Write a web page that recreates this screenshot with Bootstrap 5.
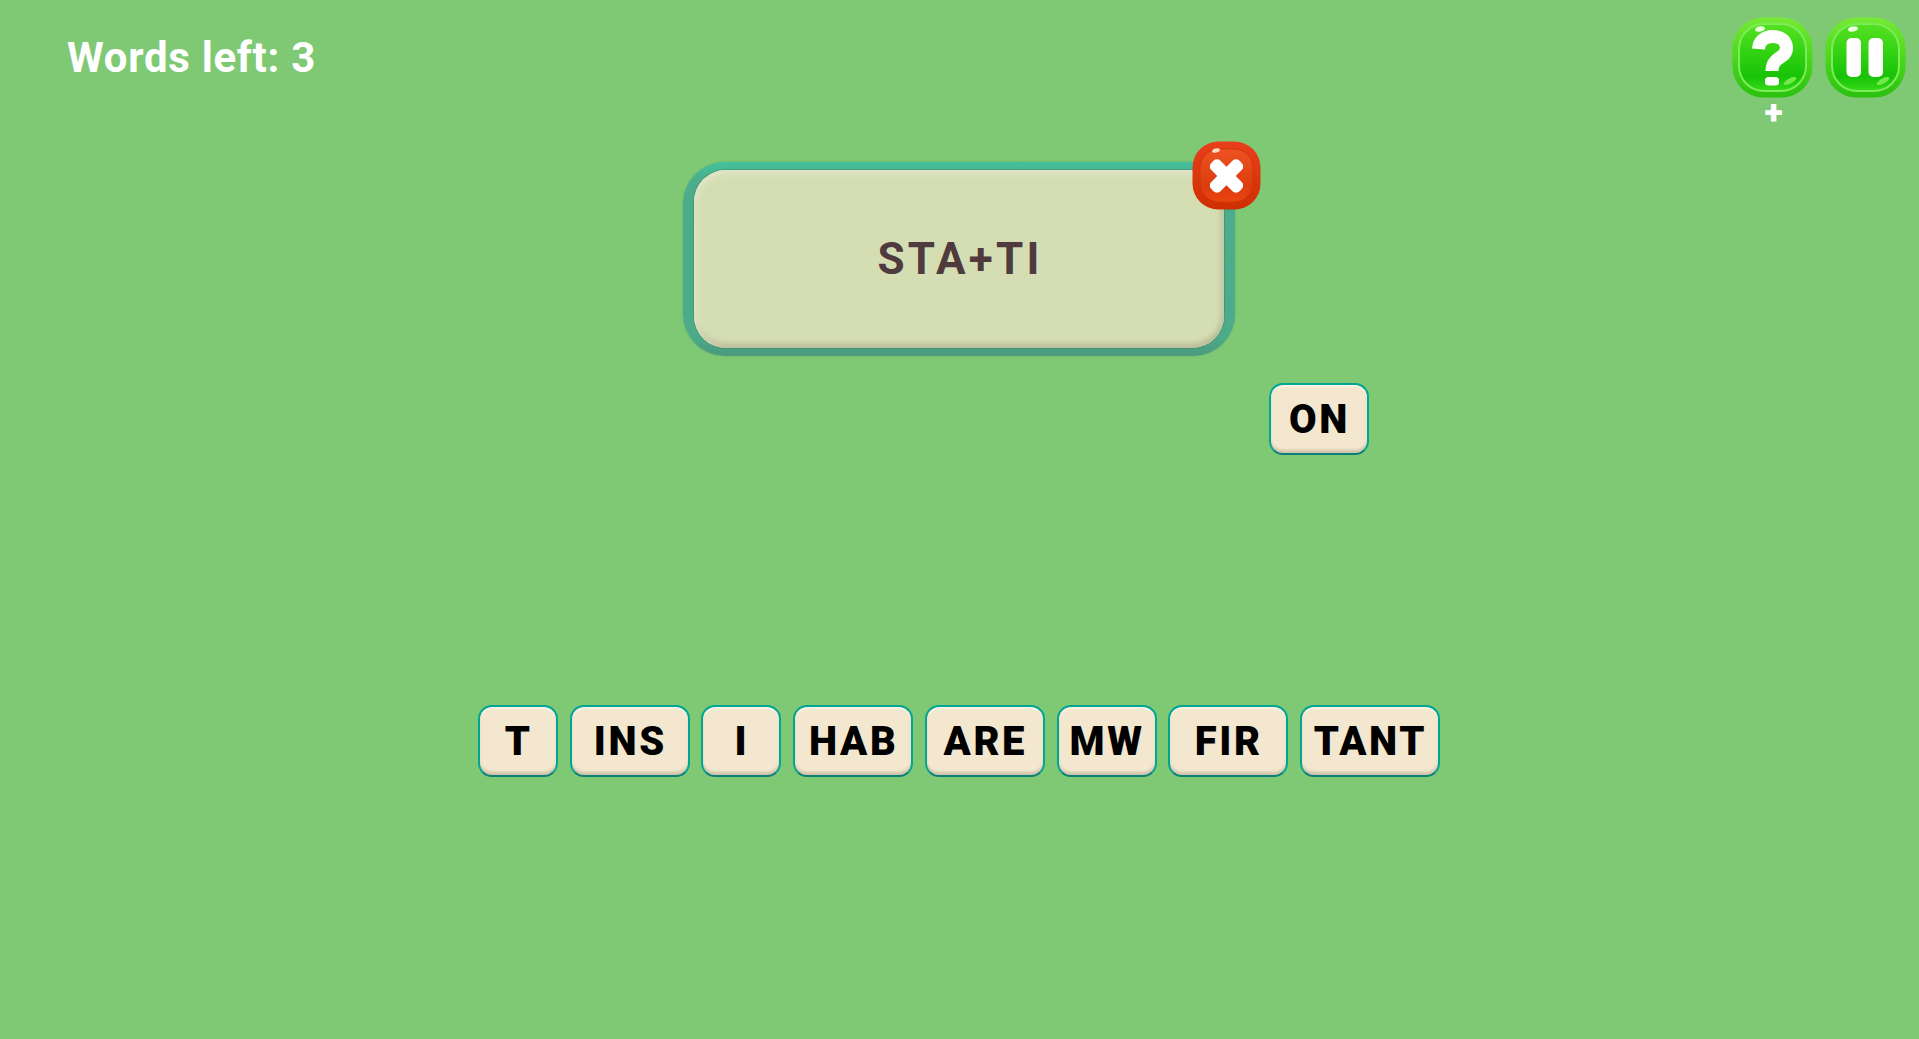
<!DOCTYPE html>
<html lang="en">
<head>
<meta charset="utf-8">
<title>Words</title>
<link href="https://cdn.jsdelivr.net/npm/bootstrap@5.3.0/dist/css/bootstrap.min.css" rel="stylesheet">
<style>
html,body{height:100%;}
body{background:#7fc975;font-family:Roboto,"Liberation Sans",sans-serif;overflow:hidden;}
.game-stage{width:1919px;height:1039px;}
.top-strip{height:162px;padding:17px 13px 0 67px;}
.words-left{font-size:42px;font-weight:700;line-height:82px;margin:0;color:#fff;letter-spacing:.7px;}
.tool-gap{gap:12px;}
.tool-btn{width:81px;height:81px;display:block;}
.tool-col{width:81px;}
.hint-plus{color:#fff;font-size:34px;font-weight:900;line-height:1;height:30px;margin:-3px 0 0 2px;}
.word-panel{width:552px;height:194px;margin-right:2px;padding:8px 11px;border-radius:42px;background:linear-gradient(#43c19c,#4bad8b 10%,#4bab8a 90%,#4a9a7b);box-shadow:0 0 2px rgba(70,140,110,.6);}
.word-inner{border-radius:32px;background:#d5deb3;box-shadow:inset 0 6px 6px -2px #e1e7ca,inset 5px 0 6px -3px #e1e7ca,inset -5px 0 6px -3px #b7bb98,inset 0 -6px 6px -2px #b6b798,0 0 0 1px rgba(70,110,80,.35);}
.word-text{color:#4f3a3d;font-size:44px;font-weight:700;letter-spacing:3.2px;line-height:1;padding-left:3px;}
.close-pos{top:-21px;right:-26px;width:69px;height:69px;}
.on-strip{padding:27px 0 0 1269px;height:349px;}
.tile-btn{height:72px;padding:2px 0 0 1px;border-radius:14px;border:2.5px solid #00a594;border-bottom-color:#0b7f78;background:#f3e7cf;color:#000;font-size:40px;font-weight:900;letter-spacing:2.6px;line-height:1;box-shadow:inset 0 3px 2px -1px #fbf5e6,inset 0 -4px 3px -1px #cfc2a8;}
.tile-btn:hover{background:#f3e7cf;color:#000;border-color:#00a594;border-bottom-color:#0b7f78;}
.w1{width:80px;}.w2{width:100px;}.w3{width:120px;}.w4{width:140px;}
.tile-row{gap:11.7px;margin-right:1px;}
</style>
</head>
<body>
<main class="game-stage d-flex flex-column">
  <header class="top-strip d-flex justify-content-between align-items-start">
    <h1 class="words-left">Words left: 3</h1>
    <div class="d-flex tool-gap align-items-start">
      <div class="tool-col d-flex flex-column align-items-center">
        <svg class="tool-btn" viewBox="0 0 81 81" role="img" aria-label="Help">
          <defs>
            <linearGradient id="gr1" x1="0" y1="0" x2="0" y2="1"><stop offset="0" stop-color="#76ea34"/><stop offset=".5" stop-color="#4bd81c"/><stop offset="1" stop-color="#2bc010"/></linearGradient>
            <linearGradient id="gr2" x1="0" y1="0" x2="0" y2="1"><stop offset="0" stop-color="#55e022"/><stop offset=".5" stop-color="#2cd010"/><stop offset=".8" stop-color="#18c206"/><stop offset="1" stop-color="#33da18"/></linearGradient>
          </defs>
          <rect x="0.500" y="0.500" width="80" height="80" rx="31" fill="url(#gr1)"/>
          <rect x="6" y="6" width="69" height="69" rx="26" fill="#7cec58"/>
          <rect x="8" y="8" width="65" height="65" rx="24" fill="url(#gr2)"/>
          <ellipse cx="28" cy="12" rx="5" ry="2.500" fill="#eaffdf" transform="rotate(-12 28 12)"/>
          <ellipse cx="58" cy="64" rx="7" ry="2.500" fill="#74e94a" transform="rotate(-28 58 64)"/>
          <path d="M26.500 32C27 24 33 19.500 40.500 19.500C49 19.500 54.500 24 54.500 31C54.500 42 40 39 40 54" fill="none" stroke="#fff" stroke-width="13"/>
          <rect x="33" y="60" width="14" height="8.500" rx="3.500" fill="#fff"/>
        </svg>
        <span class="hint-plus text-center">+</span>
      </div>
      <svg class="tool-btn" viewBox="0 0 81 81" role="img" aria-label="Pause">
        <rect x="0.500" y="0.500" width="80" height="80" rx="31" fill="url(#gr1)"/>
        <rect x="6" y="6" width="69" height="69" rx="26" fill="#7cec58"/>
        <rect x="8" y="8" width="65" height="65" rx="24" fill="url(#gr2)"/>
        <ellipse cx="28" cy="12" rx="5" ry="2.500" fill="#eaffdf" transform="rotate(-12 28 12)"/>
        <ellipse cx="58" cy="64" rx="7" ry="2.500" fill="#74e94a" transform="rotate(-28 58 64)"/>
        <rect x="21.500" y="21" width="14.500" height="39" rx="5" fill="#fff"/>
        <rect x="43.500" y="21" width="14.500" height="39" rx="5" fill="#fff"/>
      </svg>
    </div>
  </header>
  <section class="d-flex justify-content-center">
    <div class="word-panel position-relative">
      <div class="word-inner h-100 d-flex align-items-center justify-content-center"><span class="word-text">STA+TI</span></div>
      <svg class="close-pos position-absolute" viewBox="0 0 69 69" role="img" aria-label="Close">
        <defs>
          <linearGradient id="rd1" x1="0" y1="0" x2="0" y2="1"><stop offset="0" stop-color="#e8401a"/><stop offset="1" stop-color="#cf2e02"/></linearGradient>
          <linearGradient id="rd2" x1="0" y1="0" x2="0" y2="1"><stop offset="0" stop-color="#ee5322"/><stop offset=".7" stop-color="#dc3d0e"/><stop offset="1" stop-color="#ea4410"/></linearGradient>
        </defs>
        <rect x="0.500" y="0.500" width="68" height="68" rx="26" fill="url(#rd1)"/>
        <rect x="8" y="8" width="53" height="53" rx="19" fill="url(#rd2)" stroke="#d23608" stroke-width="1"/>
        <ellipse cx="24" cy="9.500" rx="4" ry="2" fill="#ffd9c8" transform="rotate(-15 24 9.500)"/>
        <g transform="rotate(45 34.500 35)" fill="#fff"><rect x="14.500" y="28.500" width="40" height="13" rx="5"/><rect x="28" y="15" width="13" height="40" rx="5"/></g>
      </svg>
    </div>
  </section>
  <div class="on-strip"><button type="button" class="btn tile-btn w2">ON</button></div>
  <div class="tile-row d-flex justify-content-center">
    <button type="button" class="btn tile-btn w1">T</button>
    <button type="button" class="btn tile-btn w3">INS</button>
    <button type="button" class="btn tile-btn w1">I</button>
    <button type="button" class="btn tile-btn w3">HAB</button>
    <button type="button" class="btn tile-btn w3">ARE</button>
    <button type="button" class="btn tile-btn w2">MW</button>
    <button type="button" class="btn tile-btn w3">FIR</button>
    <button type="button" class="btn tile-btn w4">TANT</button>
  </div>
</main>
<script src="https://cdn.jsdelivr.net/npm/bootstrap@5.3.0/dist/js/bootstrap.bundle.min.js"></script>
</body>
</html>
